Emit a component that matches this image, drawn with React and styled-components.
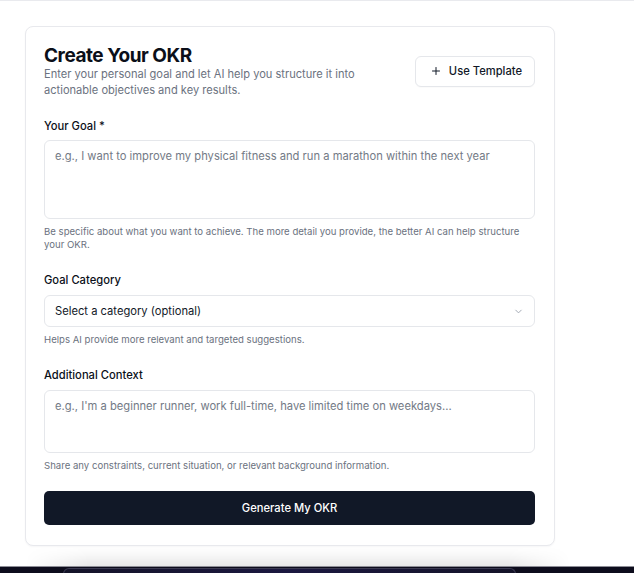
import React from "react";
import styled, { createGlobalStyle } from "styled-components";
import { Plus, ChevronDown } from "lucide-react";

const Global = createGlobalStyle`
  html, body { margin: 0; padding: 0; background: #ffffff; }
  body { font-family: Inter, "Noto Sans", Arial, sans-serif; color: #111827; -webkit-font-smoothing: antialiased; }
  * { box-sizing: border-box; }
`;

const Page = styled.div`
  min-height: 100vh;
  display: flex;
  flex-direction: column;
  border-top: 1px solid #e9eaee;
`;

const Main = styled.main`
  padding: 25px 0 0 25px;
`;

const Card = styled.section`
  width: 530px;
  background: #fff;
  border: 1px solid #e8e9ed;
  border-radius: 8px;
  box-shadow: 0 1px 2px rgba(16, 24, 40, 0.04);
  padding: 18px 19px 20px 18px;
  display: flex;
  flex-direction: column;
`;

const Header = styled.header`
  display: flex;
  align-items: center;
  justify-content: space-between;
  margin-bottom: 20px;
`;

const HeadText = styled.div`
  display: flex;
  flex-direction: column;
`;

const Title = styled.h1`
  margin: 0;
  font-size: 19px;
  line-height: 21px;
  font-weight: 700;
  letter-spacing: -0.025em;
  color: #0b0f19;
`;

const Subtitle = styled.p`
  margin: 0;
  width: 330px;
  font-size: 11.1px;
  line-height: 16px;
  color: #6b7280;
`;

const OutlineButton = styled.button`
  display: inline-flex;
  align-items: center;
  gap: 7px;
  height: 31px;
  margin-top: -1px;
  padding: 0 12px 0 14px;
  border: 1px solid #e5e7eb;
  border-radius: 6px;
  background: #fff;
  font-family: inherit;
  font-size: 11.2px;
  font-weight: 500;
  color: #111827;
  box-shadow: 0 1px 1px rgba(0,0,0,0.02);
`;

const Field = styled.div`
  display: flex;
  flex-direction: column;
  margin-bottom: ${(p) => (p.$last ? 19 : 21)}px;
`;

const Label = styled.label`
  font-size: 11.2px;
  line-height: 16px;
  font-weight: 500;
  color: #0b0f19;
  margin-bottom: ${(p) => (p.$tight ? 6 : 7)}px;
`;

const TextArea = styled.textarea`
  width: 100%;
  height: ${(p) => p.$h}px;
  resize: none;
  border: 1px solid #e5e7eb;
  border-radius: 6px;
  padding: 8px 10px;
  font-family: inherit;
  font-size: 11.2px;
  line-height: 14px;
  color: #111827;
  background: #fff;
  outline: none;
  &::placeholder { color: #737a86; }
`;

const SelectBox = styled.div`
  height: 32px;
  border: 1px solid #e5e7eb;
  border-radius: 6px;
  display: flex;
  align-items: center;
  justify-content: space-between;
  padding: 0 10px 0 10px;
  font-size: 11.2px;
  color: #111827;
  background: #fff;
`;

const Help = styled.p`
  margin: 6px 0 0;
  font-size: 9.6px;
  line-height: 13px;
  color: #6b7280;
`;

const PrimaryButton = styled.button`
  height: 34px;
  width: 100%;
  border: none;
  border-radius: 5px;
  background: #111827;
  color: #fff;
  font-family: inherit;
  font-size: 11.2px;
  font-weight: 500;
`;

const Shade = styled.div`
  flex: 1;
  min-height: 19px;
  background: linear-gradient(to bottom, rgba(255,255,255,0) 0%, rgba(0,0,0,0.025) 40%, rgba(0,0,0,0.09) 100%);
  -webkit-mask-image: linear-gradient(to right, transparent 4%, #000 14%, #000 80%, transparent 90%);
  mask-image: linear-gradient(to right, transparent 4%, #000 14%, #000 80%, transparent 90%);
`;

const Dock = styled.div`
  height: 7px;
  background: #0d0c1c;
  border-top: 1px solid #8d8d96;
  display: flex;
  padding-left: 63px;
`;

const DockPanel = styled.div`
  width: 453px;
  height: 100%;
  margin-top: 1px;
  border-radius: 8px 8px 0 0;
  border: 1px solid #3a3950;
  border-bottom: none;
  background: linear-gradient(to right, #141328, #1b1840 50%, #141328);
`;

export default function App() {
  return (
    <>
      <Global />
      <Page>
        <Main>
          <Card>
            <Header>
              <HeadText>
                <Title>Create Your OKR</Title>
                <Subtitle>
                  Enter your personal goal and let AI help you structure it into actionable objectives and key results.
                </Subtitle>
              </HeadText>
              <OutlineButton>
                <Plus size={12} strokeWidth={2} />
                Use Template
              </OutlineButton>
            </Header>

            <Field>
              <Label $tight>Your Goal *</Label>
              <TextArea
                $h={79}
                placeholder="e.g., I want to improve my physical fitness and run a marathon within the next year"
              />
              <Help>
                Be specific about what you want to achieve. The more detail you provide, the better AI can help structure your OKR.
              </Help>
            </Field>

            <Field>
              <Label>Goal Category</Label>
              <SelectBox>
                <span>Select a category (optional)</span>
                <ChevronDown size={11} color="#9ca3af" strokeWidth={2} />
              </SelectBox>
              <Help>Helps AI provide more relevant and targeted suggestions.</Help>
            </Field>

            <Field $last>
              <Label>Additional Context</Label>
              <TextArea
                $h={63}
                placeholder="e.g., I'm a beginner runner, work full-time, have limited time on weekdays..."
              />
              <Help>Share any constraints, current situation, or relevant background information.</Help>
            </Field>

            <PrimaryButton>Generate My OKR</PrimaryButton>
          </Card>
        </Main>
        <Shade />
        <Dock>
          <DockPanel />
        </Dock>
      </Page>
    </>
  );
}
